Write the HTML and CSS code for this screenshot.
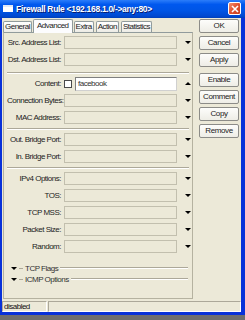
FILE: index.html
```html
<!DOCTYPE html>
<html lang="en">
<head>
    <meta charset="UTF-8">
    <title>Firewall Rule</title>
    <link rel="stylesheet" href="styles.css">
</head>
<body>
    <div class="window">
        <!-- 标题栏 -->
        <div class="titlebar">
            <span class="app-icon"></span>
            <span class="title">Firewall Rule &lt;192.168.1.0/-&gt;any:80&gt;</span>
            <span class="close">
                <svg width="8" height="8" viewBox="0 0 8 8">
                    <path d="M1 1 L7 7 M7 1 L1 7" stroke="#fff" stroke-width="1.6" fill="none"/>
                </svg>
            </span>
        </div>

        <div class="main">
            <!-- 左侧：标签页 + 面板 -->
            <div class="left">
                <div class="tabs">
                    <span class="tab">General</span>
                    <span class="tab active">Advanced</span>
                    <span class="tab">Extra</span>
                    <span class="tab">Action</span>
                    <span class="tab">Statistics</span>
                </div>
                <div class="panel">
                    <div class="group">
                        <div class="row"><label>Src. Address List:</label><div class="field"></div><i class="down"></i></div>
                        <div class="row"><label>Dst. Address List:</label><div class="field"></div><i class="down"></i></div>
                    </div>
                    <div class="group">
                        <div class="row">
                            <label>Content:</label>
                            <div class="combo"><span class="check"></span><div class="field white">facebook</div></div>
                            <i class="up"></i>
                        </div>
                        <div class="row"><label>Connection Bytes:</label><div class="field"></div><i class="down"></i></div>
                        <div class="row"><label>MAC Address:</label><div class="field"></div><i class="down"></i></div>
                    </div>
                    <div class="group">
                        <div class="row"><label>Out. Bridge Port:</label><div class="field"></div><i class="down"></i></div>
                        <div class="row"><label>In. Bridge Port:</label><div class="field"></div><i class="down"></i></div>
                    </div>
                    <div class="group last">
                        <div class="row"><label>IPv4 Options:</label><div class="field"></div><i class="down"></i></div>
                        <div class="row"><label>TOS:</label><div class="field"></div><i class="down"></i></div>
                        <div class="row"><label>TCP MSS:</label><div class="field"></div><i class="down"></i></div>
                        <div class="row"><label>Packet Size:</label><div class="field"></div><i class="down"></i></div>
                        <div class="row"><label>Random:</label><div class="field"></div><i class="down"></i></div>
                    </div>
                    <div class="fold first"><i class="down"></i><span class="dash"></span><span>TCP Flags</span><span class="line"></span></div>
                    <div class="fold"><i class="down"></i><span class="dash"></span><span>ICMP Options</span><span class="line"></span></div>
                </div>
            </div>

            <!-- 右侧按钮 -->
            <div class="buttons">
                <button>OK</button>
                <button>Cancel</button>
                <button>Apply</button>
                <button class="sep">Enable</button>
                <button>Comment</button>
                <button>Copy</button>
                <button>Remove</button>
            </div>
        </div>

        <!-- 状态栏 -->
        <div class="status">
            <div class="cell first">disabled</div>
            <div class="cell rest"></div>
        </div>
    </div>
    <div class="desk"></div>
</body>
</html>
```

FILE: styles.css
```css
* {
    margin: 0;
    padding: 0;
    box-sizing: border-box;
}

body {
    width: 245px;
    height: 320px;
    overflow: hidden;
    background-color: #7a7a7a;
    font-family: "Liberation Sans", Arial, sans-serif;
    font-size: 8px;
    letter-spacing: -0.5px;
    color: #111;
}

.window {
    width: 245px;
    height: 315px;
    background-color: #ece9d8;
    border-left: 2px solid #0831d9;
    border-right: 4px solid #0831d9;
    border-bottom: 3px solid #0831d9;
    display: flex;
    flex-direction: column;
}

/* 标题栏 */
.titlebar {
    height: 18px;
    margin: 0 -4px 0 -2px;
    background: linear-gradient(#2b7dfa, #0058ee 25%, #0055e5 60%, #0048d0 90%, #003fb8);
    display: flex;
    align-items: center;
    padding-left: 3px;
}

.app-icon {
    width: 10px;
    height: 7px;
    background-color: #fff;
    border-top: 2px solid #dfe8f7;
}

.title {
    margin-left: 3px;
    color: #fff;
    font-weight: bold;
    font-size: 8.5px;
    letter-spacing: -0.3px;
    text-shadow: 1px 1px 0 #0a1e70;
}

.close {
    margin-left: auto;
    margin-right: 4px;
    width: 13px;
    height: 13px;
    border: 1px solid #fff;
    border-radius: 2px;
    background: linear-gradient(135deg, #f09070, #e0502f 50%, #c8401f);
    display: flex;
    align-items: center;
    justify-content: center;
}

.main {
    height: 282px;
    display: flex;
}

.left {
    width: 191px;
    display: flex;
    flex-direction: column;
}

/* 标签页 */
.tabs {
    height: 14px;
    padding-left: 1px;
    display: flex;
    align-items: flex-end;
}

.tab {
    height: 11px;
    line-height: 10px;
    padding: 0 1px;
    margin-right: 2px;
    border: 1px solid #919b9c;
    border-bottom: none;
    border-radius: 2px 2px 0 0;
    background: linear-gradient(#fff, #ecebe5);
    color: #222;
}

.tab.active {
    height: 14px;
    line-height: 12px;
    padding: 0 3px;
    margin: 0 1px -1px -1px;
    background: #fcfcfe;
    position: relative;
}

.panel {
    flex: 1;
    margin-left: 1px;
    border: 1px solid #b5b2a0;
    border-top-color: #919b9c;
    display: flex;
    flex-direction: column;
}

.group {
    padding: 3px 0 4px;
    margin: 0 3px;
    border-bottom: 1px solid #aca899;
    box-shadow: 0 1px 0 #fff;
    display: flex;
    flex-direction: column;
    gap: 4px;
}

.group:first-child {
    padding-top: 3px;
    padding-bottom: 6px;
}

.group.last {
    border-bottom: none;
    box-shadow: none;
    padding-bottom: 0;
}

.group + .group {
    margin-top: 1px;
}

.row {
    height: 13px;
    display: grid;
    grid-template-columns: 54px 113px 15px;
    column-gap: 3px;
    align-items: center;
}

.row label {
    text-align: right;
    white-space: nowrap;
    color: #222;
}

.field {
    height: 13px;
    border: 1px solid #c2bfae;
    background-color: #ece9d8;
}

.combo {
    display: flex;
    align-items: center;
    gap: 3px;
}

.check {
    width: 8px;
    height: 8px;
    border: 1px solid #4a4a4a;
    background-color: #fff;
}

.field.white {
    flex: 1;
    height: 14px;
    background-color: #fff;
    border-color: #7f7f7f #d0d0d0 #d0d0d0 #7f7f7f;
    line-height: 12px;
    padding-left: 2px;
    color: #333;
}

.down,
.up {
    justify-self: center;
    width: 0;
    height: 0;
    border-left: 3px solid transparent;
    border-right: 3px solid transparent;
}

.down {
    border-top: 3px solid #000;
}

.up {
    border-bottom: 3px solid #000;
}

/* 折叠项 */
.fold {
    height: 11px;
    margin: 0 4px 0 7px;
    display: flex;
    align-items: center;
    color: #333;
}

.fold.first {
    margin-top: 10px;
}

.fold .dash {
    width: 4px;
    margin: 0 2px 0 2px;
    border-top: 1px solid #aca899;
}

.fold .line {
    flex: 1;
    margin-left: 2px;
    border-top: 1px solid #aca899;
    border-bottom: 1px solid #fff;
}

/* 右侧按钮 */
.buttons {
    width: 40px;
    margin-left: 6px;
    padding-top: 1px;
    display: flex;
    flex-direction: column;
    gap: 3px;
}

.buttons button {
    height: 14px;
    border: 1px solid #8c8c88;
    border-radius: 2px;
    background: linear-gradient(#fdfdfb, #eeede6);
    font-family: "Liberation Sans", Arial, sans-serif;
    font-size: 8px;
    letter-spacing: -0.4px;
    color: #222;
}

.buttons .sep {
    margin-top: 3px;
}

/* 状态栏 */
.status {
    height: 11px;
    margin-top: 2px;
    display: flex;
    gap: 1px;
}

.cell {
    height: 11px;
    border: 1px solid;
    border-color: #aca899 #fff #fff #aca899;
    line-height: 9px;
    padding-left: 1px;
}

.cell.first {
    width: 45px;
}

.cell.rest {
    width: 193px;
}

.desk {
    height: 5px;
    background-color: #6e6e6e;
}
```
